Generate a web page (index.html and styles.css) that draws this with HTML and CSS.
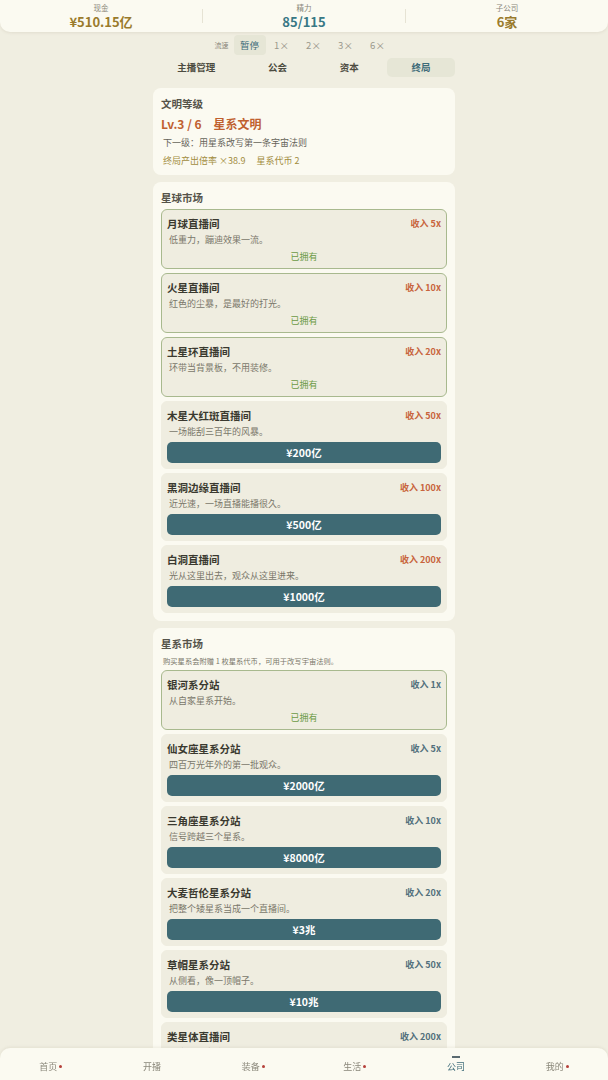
FILE: index.html
```html
<!DOCTYPE html>
<html lang="zh-CN">
<head>
<meta charset="utf-8">
<title>终局</title>
<link rel="stylesheet" href="styles.css">
</head>
<body>
<header class="stats">
  <div class="stat">
    <div class="stat-label">现金</div>
    <div class="stat-value gold">¥510.15亿</div>
  </div>
  <span class="divider"></span>
  <div class="stat">
    <div class="stat-label">精力</div>
    <div class="stat-value teal">85/115</div>
  </div>
  <span class="divider"></span>
  <div class="stat">
    <div class="stat-label">子公司</div>
    <div class="stat-value gold">6家</div>
  </div>
</header>

<div class="speed">
  <span class="speed-label">流速</span>
  <span class="speed-btn active">暂停</span>
  <span class="speed-btn">1×</span>
  <span class="speed-btn">2×</span>
  <span class="speed-btn">3×</span>
  <span class="speed-btn">6×</span>
</div>

<nav class="tabs">
  <span class="tab">主播管理</span>
  <span class="tab">公会</span>
  <span class="tab">资本</span>
  <span class="tab active">终局</span>
</nav>

<main class="content">
  <section class="panel civ">
    <div class="panel-title">文明等级</div>
    <div class="civ-level"><span>Lv.3 / 6</span><span class="civ-name">星系文明</span></div>
    <div class="civ-next">下一级：用星系改写第一条宇宙法则</div>
    <div class="civ-stats"><span>终局产出倍率 ×38.9</span><span class="civ-token">星系代币 2</span></div>
  </section>

  <section class="panel">
    <div class="panel-title">星球市场</div>
    <div class="item-list">
      <div class="item owned">
        <div class="item-head"><span class="item-name">月球直播间</span><span class="income">收入 5x</span></div>
        <div class="item-desc">低重力，蹦迪效果一流。</div>
        <div class="item-owned">已拥有</div>
      </div>
      <div class="item owned">
        <div class="item-head"><span class="item-name">火星直播间</span><span class="income">收入 10x</span></div>
        <div class="item-desc">红色的尘暴，是最好的打光。</div>
        <div class="item-owned">已拥有</div>
      </div>
      <div class="item owned">
        <div class="item-head"><span class="item-name">土星环直播间</span><span class="income">收入 20x</span></div>
        <div class="item-desc">环带当背景板，不用装修。</div>
        <div class="item-owned">已拥有</div>
      </div>
      <div class="item">
        <div class="item-head"><span class="item-name">木星大红斑直播间</span><span class="income">收入 50x</span></div>
        <div class="item-desc">一场能刮三百年的风暴。</div>
        <button class="buy">¥200亿</button>
      </div>
      <div class="item">
        <div class="item-head"><span class="item-name">黑洞边缘直播间</span><span class="income">收入 100x</span></div>
        <div class="item-desc">近光速，一场直播能播很久。</div>
        <button class="buy">¥500亿</button>
      </div>
      <div class="item">
        <div class="item-head"><span class="item-name">白洞直播间</span><span class="income">收入 200x</span></div>
        <div class="item-desc">光从这里出去，观众从这里进来。</div>
        <button class="buy">¥1000亿</button>
      </div>
    </div>
  </section>

  <section class="panel">
    <div class="panel-title">星系市场</div>
    <div class="panel-note">购买星系会附赠 1 枚星系代币，可用于改写宇宙法则。</div>
    <div class="item-list galaxy">
      <div class="item owned">
        <div class="item-head"><span class="item-name">银河系分站</span><span class="income">收入 1x</span></div>
        <div class="item-desc">从自家星系开始。</div>
        <div class="item-owned">已拥有</div>
      </div>
      <div class="item">
        <div class="item-head"><span class="item-name">仙女座星系分站</span><span class="income">收入 5x</span></div>
        <div class="item-desc">四百万光年外的第一批观众。</div>
        <button class="buy">¥2000亿</button>
      </div>
      <div class="item">
        <div class="item-head"><span class="item-name">三角座星系分站</span><span class="income">收入 10x</span></div>
        <div class="item-desc">信号跨越三个星系。</div>
        <button class="buy">¥8000亿</button>
      </div>
      <div class="item">
        <div class="item-head"><span class="item-name">大麦哲伦星系分站</span><span class="income">收入 20x</span></div>
        <div class="item-desc">把整个矮星系当成一个直播间。</div>
        <button class="buy">¥3兆</button>
      </div>
      <div class="item">
        <div class="item-head"><span class="item-name">草帽星系分站</span><span class="income">收入 50x</span></div>
        <div class="item-desc">从侧看，像一顶帽子。</div>
        <button class="buy">¥10兆</button>
      </div>
      <div class="item">
        <div class="item-head"><span class="item-name">类星体直播间</span><span class="income">收入 200x</span></div>
        <div class="item-desc">宇宙里最亮的一盏灯。</div>
        <button class="buy">¥50兆</button>
      </div>
    </div>
  </section>
</main>

<nav class="bottom-nav">
  <div class="nav-item"><span class="nav-bar"></span><span class="nav-label">首页<i class="dot"></i></span></div>
  <div class="nav-item"><span class="nav-bar"></span><span class="nav-label">开播</span></div>
  <div class="nav-item"><span class="nav-bar"></span><span class="nav-label">装备<i class="dot"></i></span></div>
  <div class="nav-item"><span class="nav-bar"></span><span class="nav-label">生活<i class="dot"></i></span></div>
  <div class="nav-item active"><span class="nav-bar"></span><span class="nav-label">公司</span></div>
  <div class="nav-item"><span class="nav-bar"></span><span class="nav-label">我的<i class="dot"></i></span></div>
</nav>
</body>
</html>
```

FILE: styles.css
```css
* { box-sizing: border-box; }

html, body {
  margin: 0;
  padding: 0;
}

body {
  background: #f0eee1;
  font-family: "Noto Sans CJK SC", "Noto Sans", sans-serif;
  color: #3b3a30;
  padding-bottom: 60px;
}

/* header stats */
.stats {
  display: flex;
  align-items: center;
  height: 32px;
  background: #fbfaf1;
  border-radius: 0 0 10px 10px;
  box-shadow: 0 1px 3px rgba(120, 110, 80, 0.12);
}

.stat {
  flex: 1;
  text-align: center;
  padding-top: 0;
}

.stat-label {
  font-size: 7.5px;
  line-height: 11px;
  color: #8a877a;
}

.stat-value {
  font-size: 13px;
  line-height: 17px;
  font-weight: 700;
}

.gold { color: #9a7b2c; }
.teal { color: #387885; }

.divider {
  width: 1px;
  height: 14px;
  background: #e6e3d4;
}

/* speed row */
.speed {
  display: flex;
  justify-content: center;
  align-items: center;
  margin-top: 3px;
  height: 20px;
}

.speed-label {
  font-size: 7px;
  color: #8a877a;
  margin-right: 5px;
}

.speed-btn {
  min-width: 32px;
  height: 20px;
  line-height: 20px;
  text-align: center;
  font-size: 9.5px;
  color: #9a988c;
  border-radius: 4px;
}

.speed-btn.active {
  background: #e6e6d6;
  color: #3d6b78;
}

/* tabs */
.tabs {
  display: flex;
  gap: 4px;
  width: 302px;
  margin: 3px auto 0;
}

.tab {
  flex: 1 1 auto;
  height: 19px;
  line-height: 19px;
  text-align: center;
  font-size: 9.5px;
  font-weight: 700;
  color: #4c4b40;
  border-radius: 5px;
}

.tab.active {
  background: #e6e6d6;
  color: #3d6b78;
}

/* content */
.content {
  width: 302px;
  margin: 11px auto 0;
  display: flex;
  flex-direction: column;
  gap: 7px;
}

.panel {
  background: #fbfaf1;
  border-radius: 8px;
  padding: 8px 8px 8px;
}

.panel-title {
  font-size: 10.5px;
  line-height: 16px;
  font-weight: 700;
  color: #55534a;
}

.civ {
  padding-bottom: 7px;
}

.civ-level {
  margin-top: 3px;
  font-size: 12px;
  line-height: 18px;
  font-weight: 700;
  color: #c0602f;
}

.civ-name {
  margin-left: 12px;
}

.civ-next {
  margin-top: 3px;
  padding-left: 2px;
  font-size: 9px;
  line-height: 14px;
  color: #66645a;
}

.civ-stats {
  margin-top: 4px;
  padding-left: 2px;
  font-size: 9px;
  line-height: 14px;
  color: #a28c3e;
}

.civ-token {
  margin-left: 11px;
}

.panel-note {
  margin: 3px 0 3px;
  padding-left: 2px;
  font-size: 7.3px;
  line-height: 12px;
  color: #7a776a;
}

.item-list {
  margin-top: 3px;
  display: flex;
  flex-direction: column;
  gap: 4px;
}

.panel-note + .item-list {
  margin-top: 0;
}

.item {
  background: #efede0;
  border: 1px solid #efede0;
  border-radius: 6px;
  padding: 5px 5px;
  display: flex;
  flex-direction: column;
}

.item.owned {
  border-color: #a8b98e;
}

.item-head {
  display: flex;
  justify-content: space-between;
  align-items: center;
  height: 16px;
}

.item-name {
  font-size: 10.5px;
  font-weight: 700;
  color: #3a392f;
}

.income {
  font-size: 9px;
  font-weight: 700;
  color: #c8643c;
}

.galaxy .income {
  color: #52707c;
}

.item-desc {
  margin-top: 2px;
  padding-left: 2px;
  font-size: 9px;
  line-height: 14px;
  color: #7a776a;
}

.item-owned {
  margin-top: 3px;
  text-align: center;
  font-size: 9px;
  line-height: 13px;
  color: #6c9a45;
}

.buy {
  margin-top: 3px;
  height: 21px;
  border: none;
  border-radius: 5px;
  background: #3f6a74;
  color: #ffffff;
  font-family: inherit;
  font-size: 10.5px;
  font-weight: 700;
  padding: 0;
  cursor: pointer;
}

/* bottom nav */
.bottom-nav {
  position: fixed;
  left: 0;
  right: 0;
  bottom: 0;
  height: 32px;
  display: flex;
  background: #fbfaf1;
  border-radius: 10px 10px 0 0;
  box-shadow: 0 -1px 3px rgba(120, 110, 80, 0.10);
  padding-top: 8px;
}

.nav-item {
  flex: 1;
  display: flex;
  flex-direction: column;
  align-items: center;
}

.nav-bar {
  width: 8px;
  height: 2px;
  background: transparent;
}

.nav-item.active .nav-bar {
  background: #5a6a70;
}

.nav-label {
  margin-top: 2px;
  font-size: 9px;
  line-height: 13px;
  color: #8a877a;
  display: flex;
  align-items: center;
}

.nav-item.active .nav-label {
  color: #3d6b78;
}

.dot {
  width: 3px;
  height: 3px;
  border-radius: 50%;
  background: #b5403a;
  margin-left: 2px;
}
```
